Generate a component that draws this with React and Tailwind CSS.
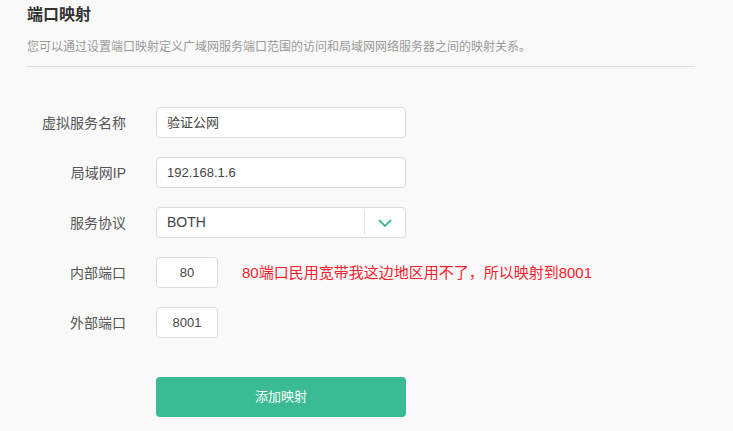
export default function App() {
  const font = { fontFamily: '"Liberation Sans", "Noto Sans CJK SC", sans-serif' };
  const Label = ({ children }) => (
    <div className="w-[99px] mr-[30px] text-right text-[14px] leading-[20px] text-[#555]">{children}</div>
  );
  return (
    <div className="min-h-screen w-full bg-[#f9f9f9] pl-[27px] pr-[38px]" style={font}>
      <h1 className="pt-[3px] text-[16px] leading-[24px] font-bold text-[#333]">端口映射</h1>
      <p className="mt-[11px] text-[12px] leading-[18px] text-[#999]">
        您可以通过设置端口映射定义广域网服务端口范围的访问和局域网网络服务器之间的映射关系。
      </p>
      <div className="mt-[10px] h-px bg-[#dddddd]" />

      <div className="mt-[40px] flex flex-col gap-[19px]">
        <div className="flex items-center">
          <Label>虚拟服务名称</Label>
          <div className="w-[250px] h-[31px] rounded-[4px] border border-[#dcdcdc] bg-white px-[10px] flex items-center text-[13px] text-[#444]">
            验证公网
          </div>
        </div>
        <div className="flex items-center">
          <Label>局域网IP</Label>
          <div className="w-[250px] h-[31px] rounded-[4px] border border-[#dcdcdc] bg-white px-[10px] flex items-center text-[13px] text-[#444]">
            192.168.1.6
          </div>
        </div>
        <div className="flex items-center">
          <Label>服务协议</Label>
          <div className="w-[250px] h-[31px] rounded-[4px] border border-[#dcdcdc] bg-white flex items-center text-[13px] text-[#444]">
            <div className="flex-1 pl-[10px] text-[14px]">BOTH</div>
            <div className="w-px h-[23px] bg-[#e2e2e2]" />
            <div className="w-[40px] flex items-center justify-center">
              <svg width="14" height="8" viewBox="0 0 14 8">
                <polyline points="1,1 7,7 13,1" fill="none" stroke="#3bbb93" strokeWidth="1.8" />
              </svg>
            </div>
          </div>
        </div>
        <div className="flex items-center">
          <Label>内部端口</Label>
          <div className="w-[62px] h-[31px] rounded-[4px] border border-[#dcdcdc] bg-white flex items-center justify-center text-[13px] text-[#444]">
            80
          </div>
          <div className="ml-[24px] text-[15px] leading-[20px] text-[#f5222d]">
            80端口民用宽带我这边地区用不了，所以映射到8001
          </div>
        </div>
        <div className="flex items-center">
          <Label>外部端口</Label>
          <div className="w-[62px] h-[31px] rounded-[4px] border border-[#dcdcdc] bg-white flex items-center justify-center text-[13px] text-[#444]">
            8001
          </div>
        </div>
      </div>

      <div className="mt-[39px] flex">
        <div className="w-[129px]" />
        <button className="w-[250px] h-[40px] rounded-[4px] bg-[#3bbb93] text-white text-[13px]">
          添加映射
        </button>
      </div>
    </div>
  );
}
